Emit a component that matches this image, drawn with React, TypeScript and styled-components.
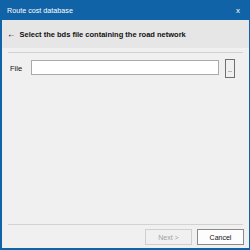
import React from 'react';
import styled, { createGlobalStyle } from 'styled-components';

const GlobalStyle = createGlobalStyle`
  html, body {
    margin: 0;
    padding: 0;
    width: 250px;
    height: 250px;
    overflow: hidden;
    font-family: "Liberation Sans", "Noto Sans", sans-serif;
  }
`;

const Window = styled.div`
  width: 250px;
  height: 250px;
  box-sizing: border-box;
  display: flex;
  flex-direction: column;
  background: #0f63a6;
  padding: 0 1px 2px 2px;
`;

const TitleBar = styled.div`
  height: 20px;
  display: flex;
  align-items: center;
  justify-content: space-between;
  padding: 0 9px 0 5px;
  color: #fff;
  font-size: 7.2px;
`;

const Close = styled.span`
  font-size: 8px;
`;

const Client = styled.div`
  flex: 1;
  display: flex;
  flex-direction: column;
  background: #f0f0f0;
`;

const Header = styled.div`
  height: 28px;
  display: flex;
  align-items: center;
  gap: 4px;
  padding: 0 5px;
  background: #e6e6e6;
  font-size: 7.5px;
  font-weight: bold;
  color: #111;
  white-space: nowrap;
`;

const Arrow = styled.span`
  font-size: 8.5px;
`;

const Separator = styled.div<{ top: number }>`
  height: 1px;
  margin: ${(p) => p.top}px 6px 0 6px;
  background: #d2d2d2;
`;

const Body = styled.div`
  flex: 1;
  padding: 6px 13px 0 8px;
`;

const Row = styled.div`
  display: flex;
  align-items: flex-start;
`;

const Label = styled.span`
  width: 21px;
  margin-top: 5px;
  font-size: 7.5px;
  color: #111;
`;

const FileInput = styled.div`
  width: 186px;
  height: 13px;
  margin-top: 1px;
  background: #fff;
  border: 1px solid #a9a9a9;
`;

const Browse = styled.div`
  margin-left: 6px;
  width: 10px;
  height: 19px;
  box-sizing: border-box;
  border: 1px solid #707070;
  background: #f0f0f0;
  font-size: 7px;
  display: flex;
  align-items: center;
  justify-content: center;
  padding-top: 2px;
  color: #222;
`;

const Footer = styled.div`
  display: flex;
  justify-content: flex-end;
  gap: 5px;
  padding: 4px 5px 3px 0;
`;

const Button = styled.div<{ disabled?: boolean }>`
  width: 45px;
  height: 14px;
  display: flex;
  align-items: center;
  justify-content: center;
  font-size: 7px;
  background: ${(p) => (p.disabled ? '#f0f0f0' : '#fdfdfd')};
  color: ${(p) => (p.disabled ? '#a0a0a0' : '#111')};
  border: 1px solid ${(p) => (p.disabled ? '#cfcfcf' : '#8a8a8a')};
`;

const App = () => {
  return (
    <>
      <GlobalStyle />
      <Window>
        <TitleBar>
          <span>Route cost database</span>
          <Close>x</Close>
        </TitleBar>
        <Client>
          <Header>
            <Arrow>←</Arrow>
            <span>Select the bds file containing the road network</span>
          </Header>
          <Separator top={4} />
          <Body>
            <Row>
              <Label>File</Label>
              <FileInput />
              <Browse>..</Browse>
            </Row>
          </Body>
          <Separator top={0} />
          <Footer>
            <Button disabled>Next &gt;</Button>
            <Button>Cancel</Button>
          </Footer>
        </Client>
      </Window>
    </>
  );
};

export default App;
